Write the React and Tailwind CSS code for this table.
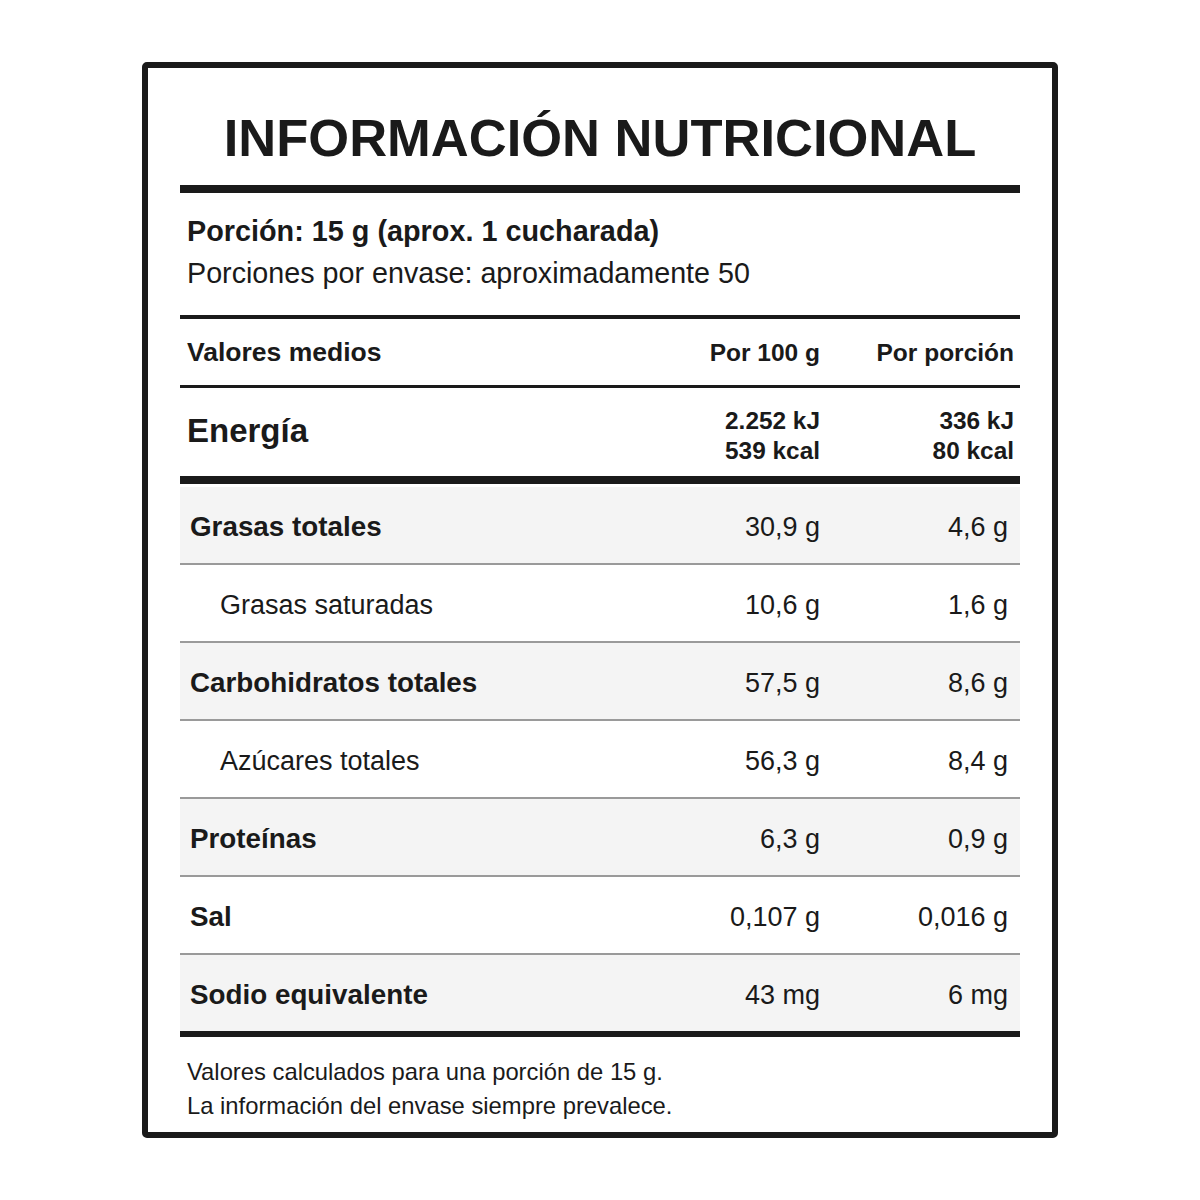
import React from "react";

const ROWS = [
  { label: "Grasas totales", per100: "30,9 g", perServing: "4,6 g", bold: true },
  { label: "Grasas saturadas", per100: "10,6 g", perServing: "1,6 g" },
  { label: "Carbohidratos totales", per100: "57,5 g", perServing: "8,6 g", bold: true },
  { label: "Azúcares totales", per100: "56,3 g", perServing: "8,4 g" },
  { label: "Proteínas", per100: "6,3 g", perServing: "0,9 g", bold: true },
  { label: "Sal", per100: "0,107 g", perServing: "0,016 g", bold: true },
  { label: "Sodio equivalente", per100: "43 mg", perServing: "6 mg", bold: true },
];

function App() {
  return (
    <div
      className="w-[1200px] h-[1200px] bg-white pt-[62px] pl-[142px] text-[#1a1a1a]"
      style={{ fontFamily: '"Liberation Sans", Arial, sans-serif' }}
    >
      <div className="w-[916px] h-[1076px] border-[6px] border-[#1a1a1a] rounded-[5px] px-[32px]">
        {/* Title */}
        <h1 className="pt-[43.5px] mb-[21px] text-[52.5px] leading-none font-bold text-center">
          INFORMACIÓN NUTRICIONAL
        </h1>
        <div className="h-[8px] bg-[#1a1a1a]" />

        {/* Serving info */}
        <div className="pl-[7px] pt-[18px] pb-[22px]">
          <p className="leading-[40px] text-[28.8px] font-bold">
            Porción: 15 g (aprox. 1 cucharada)
          </p>
          <p className="mt-[2px] leading-[40px] text-[28.7px]">
            Porciones por envase: aproximadamente 50
          </p>
        </div>
        <div className="h-[4px] bg-[#1a1a1a]" />

        {/* Header row */}
        <div className="grid grid-cols-[1fr_200px_200px] items-center h-[69px] border-b-[3px] border-[#1a1a1a] font-bold">
          <span className="pl-[7px] pt-[2px] text-[26.5px]">Valores medios</span>
          <span className="text-right pt-[2px] text-[24.5px]">Por 100 g</span>
          <span className="text-right pt-[2px] pr-[6px] text-[24.5px]">Por porción</span>
        </div>

        {/* Energy */}
        <div className="grid grid-cols-[1fr_200px_200px] items-start h-[88px] font-bold">
          <span className="pl-[7px] pt-[23px] leading-[40px] text-[33px]">Energía</span>
          <div className="pt-[18px] text-right text-[24.4px] leading-[30px]">
            <div>2.252 kJ</div>
            <div>539 kcal</div>
          </div>
          <div className="pt-[18px] text-right pr-[6px] text-[24.4px] leading-[30px]">
            <div>336 kJ</div>
            <div>80 kcal</div>
          </div>
        </div>
        <div className="h-[8px] bg-[#1a1a1a] mb-[3px]" />

        {/* Nutrient rows */}
        <div>
          {ROWS.map((row, i) => (
            <div
              key={row.label}
              className={`grid grid-cols-[1fr_200px_200px] items-center pt-[4px] text-[27px] ${
                i % 2 === 0 ? "bg-[#f4f4f4]" : "bg-white"
              } ${i < ROWS.length - 1 ? "h-[78px] border-b-2 border-[#9a9a9a]" : "h-[76px]"}`}
            >
              <span className={row.bold ? "pl-[10px] font-bold text-[27.8px]" : "pl-[40px]"}>
                {row.label}
              </span>
              <span className="text-right">{row.per100}</span>
              <span className="text-right pr-[12px]">{row.perServing}</span>
            </div>
          ))}
        </div>
        <div className="h-[6px] bg-[#1a1a1a]" />

        {/* Footnote */}
        <div className="pl-[7px] pt-[18px] text-[23.8px]">
          <p className="leading-[34px]">Valores calculados para una porción de 15 g.</p>
          <p className="leading-[34px]">La información del envase siempre prevalece.</p>
        </div>
      </div>
    </div>
  );
}

export default App;
